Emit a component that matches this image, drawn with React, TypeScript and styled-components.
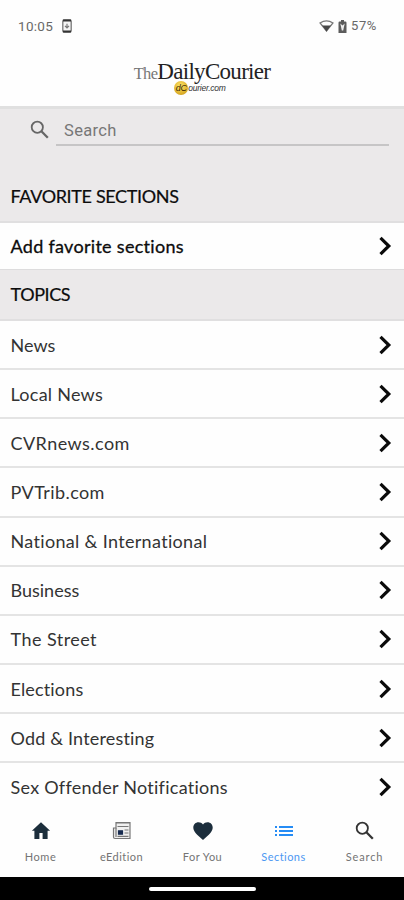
import React from "react";
import styled, { createGlobalStyle } from "styled-components";

const GlobalStyle = createGlobalStyle`
  *, *::before, *::after { box-sizing: border-box; }
  html, body { margin: 0; padding: 0; background: #fff; overflow: hidden; }
  body { font-family: Lato, "Open Sans", sans-serif; color: #111; }
`;

const Screen = styled.div`
  width: 404px;
  height: 900px;
  display: flex;
  flex-direction: column;
  overflow: hidden;
  background: #fefefe;
`;

const StatusBar = styled.div`
  flex: none;
  height: 52px;
  display: flex;
  align-items: center;
  justify-content: space-between;
  padding: 0 27px 0 18px;
  color: #686868;
  svg { display: block; }
`;

const StatusGroup = styled.div<{ $gap: number }>`
  display: flex;
  align-items: center;
  gap: ${(p) => p.$gap}px;
`;

const StatusText = styled.span<{ $size: number; $spacing: number }>`
  font: 400 ${(p) => p.$size}px/16px Roboto, sans-serif;
  letter-spacing: ${(p) => p.$spacing}px;
  white-space: nowrap;
`;

const Masthead = styled.header`
  flex: none;
  height: 57px;
  display: flex;
  flex-direction: column;
  align-items: center;
  padding-top: 7px;
  border-bottom: 3px solid #e0e0e0;
`;

const Wordmark = styled.div`
  font: 400 23px/26px "Liberation Serif", serif;
  letter-spacing: -0.7px;
  color: #222;
  white-space: nowrap;
`;

const WordmarkThe = styled.span`
  font-size: 16.5px;
  letter-spacing: -0.7px;
  color: #777;
`;

const SubBrand = styled.div`
  display: flex;
  align-items: center;
  height: 14px;
  margin: -6px 4px 0 0;
  font: italic 400 8.5px/14px "Liberation Sans", sans-serif;
  letter-spacing: -0.25px;
  color: #333;
`;

const Coin = styled.span`
  width: 14px;
  height: 14px;
  border-radius: 50%;
  background: radial-gradient(circle at 45% 35%, #ffe66a, #dcae28 65%, #b98b1c);
  color: #3a2c08;
  text-align: center;
  font-size: 9px;
`;

const SearchPanel = styled.div`
  flex: none;
  height: 63px;
  display: flex;
  gap: 6px;
  padding: 8px 15px 0 30px;
  background: #ebe9ea;
  svg { flex: none; margin-top: 3px; }
`;

const SearchField = styled.div`
  flex: 1;
  height: 29px;
  padding: 0 8px;
  border-bottom: 2px solid #c6c5c6;
  font: 400 16.5px/27px Roboto, sans-serif;
  letter-spacing: 0.35px;
  color: #777;
`;

const SectionHeading = styled.h2<{ $spacing: number }>`
  flex: none;
  height: 51px;
  margin: 0;
  padding-left: 10.5px;
  background: #ebe9ea;
  border-bottom: 2px solid #e0dfe0;
  font-size: 18px;
  font-weight: 400;
  line-height: 48px;
  letter-spacing: ${(p) => p.$spacing}px;
  color: #0c0c0c;
  -webkit-text-stroke: 0.2px #0c0c0c;
`;

const Topics = styled.div`
  flex: 1;
  min-height: 0;
  overflow: hidden;
`;

const Row = styled.div<{ $strong?: boolean }>`
  flex: none;
  height: ${(p) => (p.$strong ? 47 : 49.15)}px;
  display: flex;
  align-items: center;
  justify-content: space-between;
  padding: 0 12px 0 10.5px;
  background: #fefefe;
  border-bottom: ${(p) => (p.$strong ? "1px solid #dddcdd" : "2px solid #e4e4e4")};
  &:last-child { border-bottom-color: transparent; }
`;

const RowLabel = styled.span<{ $strong?: boolean; $spacing: number }>`
  font-size: 18px;
  line-height: 24px;
  letter-spacing: ${(p) => p.$spacing}px;
  white-space: nowrap;
  color: ${(p) => (p.$strong ? "#0c0c0c" : "#333")};
  -webkit-text-stroke: ${(p) => (p.$strong ? "0.3px #0c0c0c" : "0")};
`;

const TabBar = styled.nav`
  flex: none;
  height: 65px;
  display: grid;
  grid-template-columns: repeat(5, 81px);
  background: #fefefe;
`;

const Tab = styled.div<{ $active?: boolean; $spacing: number }>`
  display: flex;
  flex-direction: column;
  align-items: center;
  padding-top: 9px;
  gap: 8px;
  color: ${(p) => (p.$active ? "#4c98f2" : "#747474")};
  font-size: 11px;
  line-height: 16px;
  letter-spacing: ${(p) => p.$spacing}px;
`;

const SystemBar = styled.div`
  flex: none;
  height: 23px;
  display: flex;
  align-items: center;
  justify-content: center;
  background: #000;
`;

const Handle = styled.div`
  width: 107px;
  height: 4px;
  border-radius: 2px;
  background: #fff;
`;

const Chevron = () => (
  <svg width="14" height="20" viewBox="0 0 14 20" fill="none" stroke="#0a0a0a" strokeWidth="3.2">
    <path d="M2.5 1.8 10.8 10 2.5 18.2" />
  </svg>
);

const Magnifier = ({ size, color }: { size: number; color: string }) => (
  <svg width={size} height={size} viewBox="0 0 20 20" fill="none" stroke={color} strokeWidth="1.8">
    <circle cx="7.3" cy="7.2" r="5.6" />
    <path d="m11.4 11.3 6.4 6.4" strokeWidth="2.3" />
  </svg>
);

const PhoneIcon = () => (
  <svg width="10" height="14" viewBox="0 0 10 14">
    <rect x=".8" y=".8" width="8.4" height="12.4" rx="1.4" fill="#f4f4f4" stroke="#777" strokeWidth="1.3" />
    <path d="M1 1.4h8M1 12.6h8" stroke="#333" strokeWidth="2" />
    <path d="M5 4.8v3.4M3 6.8 5 8.8l2-2" fill="none" stroke="#777" strokeWidth="1.2" />
  </svg>
);

const WifiIcon = () => (
  <svg width="15" height="12" viewBox="0 0 15 12">
    <path d="M1 3Q7.5-1.3 14 3L7.5 11Z" fill="none" stroke="#777" strokeWidth="1.3" />
    <path d="M3.2 5.4H11.8L7.5 11.5Z" fill="#484848" />
  </svg>
);

const BatteryIcon = () => (
  <svg width="9" height="13" viewBox="0 0 9 13">
    <path d="M3 0h3v1.5h1.3Q8.5 1.5 8.5 2.7V13H.5V2.7Q.5 1.5 1.7 1.5H3Z" fill="#5c5c5c" />
    <path d="m2.3 3.5 1.5 7h1.4l1.5-7-2.2 2Z" fill="#eee" />
  </svg>
);

const HomeIcon = () => (
  <svg width="20" height="20" viewBox="0 0 20 20" fill="#1c2e3c">
    <path d="M10 1.3.9 9.7H3.4V18h5v-6h3.2v6h5V9.7h2.5Z" />
  </svg>
);

const PaperIcon = () => (
  <svg width="20" height="20" viewBox="0 0 20 20" fill="none" stroke="#777" strokeWidth="1.2">
    <path d="M4 1.5H18V17.5H3Q1.5 17.5 1.5 16V7H4Z" fill="#f0f0f0" />
    <path d="M4 7v9M4 2h14M5.5 5.5H16.500M12.5 9h4M12.5 12h4M5.5 15.300H16.500" />
    <path d="M6.5 9.800h4v3.400h-4Z" fill="#182c50" stroke="#182c50" />
  </svg>
);

const HeartIcon = () => (
  <svg width="20" height="20" viewBox="0 0 20 20" fill="#1c2e3c">
    <path d="M10 19C3.7 13.4.3 10.5.3 6.5.3 3.4 2.6 1.2 5.5 1.2c1.8 0 3.4.8 4.5 2.2 1.1-1.4 2.7-2.2 4.5-2.2 2.9 0 5.2 2.2 5.2 5.3 0 4-3.4 6.9-9.7 12.5Z" />
  </svg>
);

const ListIcon = () => (
  <svg width="20" height="20" viewBox="0 0 20 20" fill="none" stroke="#258cf5" strokeWidth="2">
    <path d="M1 6h2M5 6h14M1 10h2M5 10h14M1 14h2M5 14h14" />
  </svg>
);

const topics: { label: string; spacing: number }[] = [
  { label: "News", spacing: 0 },
  { label: "Local News", spacing: 0.25 },
  { label: "CVRnews.com", spacing: 0.45 },
  { label: "PVTrib.com", spacing: 0.42 },
  { label: "National & International", spacing: 0.33 },
  { label: "Business", spacing: 0 },
  { label: "The Street", spacing: 0.45 },
  { label: "Elections", spacing: 0.15 },
  { label: "Odd & Interesting", spacing: 0.17 },
  { label: "Sex Offender Notifications", spacing: 0.27 },
];

const tabs = [
  { label: "Home", spacing: 0.6, icon: <HomeIcon /> },
  { label: "eEdition", spacing: 0.45, icon: <PaperIcon /> },
  { label: "For You", spacing: 0.45, icon: <HeartIcon /> },
  { label: "Sections", spacing: 0.45, icon: <ListIcon />, active: true },
  { label: "Search", spacing: 0.85, icon: <Magnifier size={20} color="#333" /> },
];

export default function App() {
  return (
    <>
      <GlobalStyle />
      <Screen>
        <StatusBar>
          <StatusGroup $gap={9}>
            <StatusText $size={13.5} $spacing={0.3}>10:05</StatusText>
            <PhoneIcon />
          </StatusGroup>
          <StatusGroup $gap={4}>
            <WifiIcon />
            <BatteryIcon />
            <StatusText $size={13} $spacing={0.6}>57%</StatusText>
          </StatusGroup>
        </StatusBar>
        <Masthead>
          <Wordmark>
            <WordmarkThe>The</WordmarkThe>DailyCourier
          </Wordmark>
          <SubBrand>
            <Coin>dC</Coin>ourier.com
          </SubBrand>
        </Masthead>
        <SearchPanel>
          <Magnifier size={20} color="#666" />
          <SearchField>Search</SearchField>
        </SearchPanel>
        <SectionHeading $spacing={-0.35}>FAVORITE SECTIONS</SectionHeading>
        <Row $strong>
          <RowLabel $strong $spacing={0.3}>Add favorite sections</RowLabel>
          <Chevron />
        </Row>
        <SectionHeading $spacing={-0.4}>TOPICS</SectionHeading>
        <Topics>
          {topics.map((t) => (
            <Row key={t.label}>
              <RowLabel $spacing={t.spacing}>{t.label}</RowLabel>
              <Chevron />
            </Row>
          ))}
        </Topics>
        <TabBar>
          {tabs.map((t) => (
            <Tab key={t.label} $active={t.active} $spacing={t.spacing}>
              {t.icon}
              {t.label}
            </Tab>
          ))}
        </TabBar>
        <SystemBar>
          <Handle />
        </SystemBar>
      </Screen>
    </>
  );
}
